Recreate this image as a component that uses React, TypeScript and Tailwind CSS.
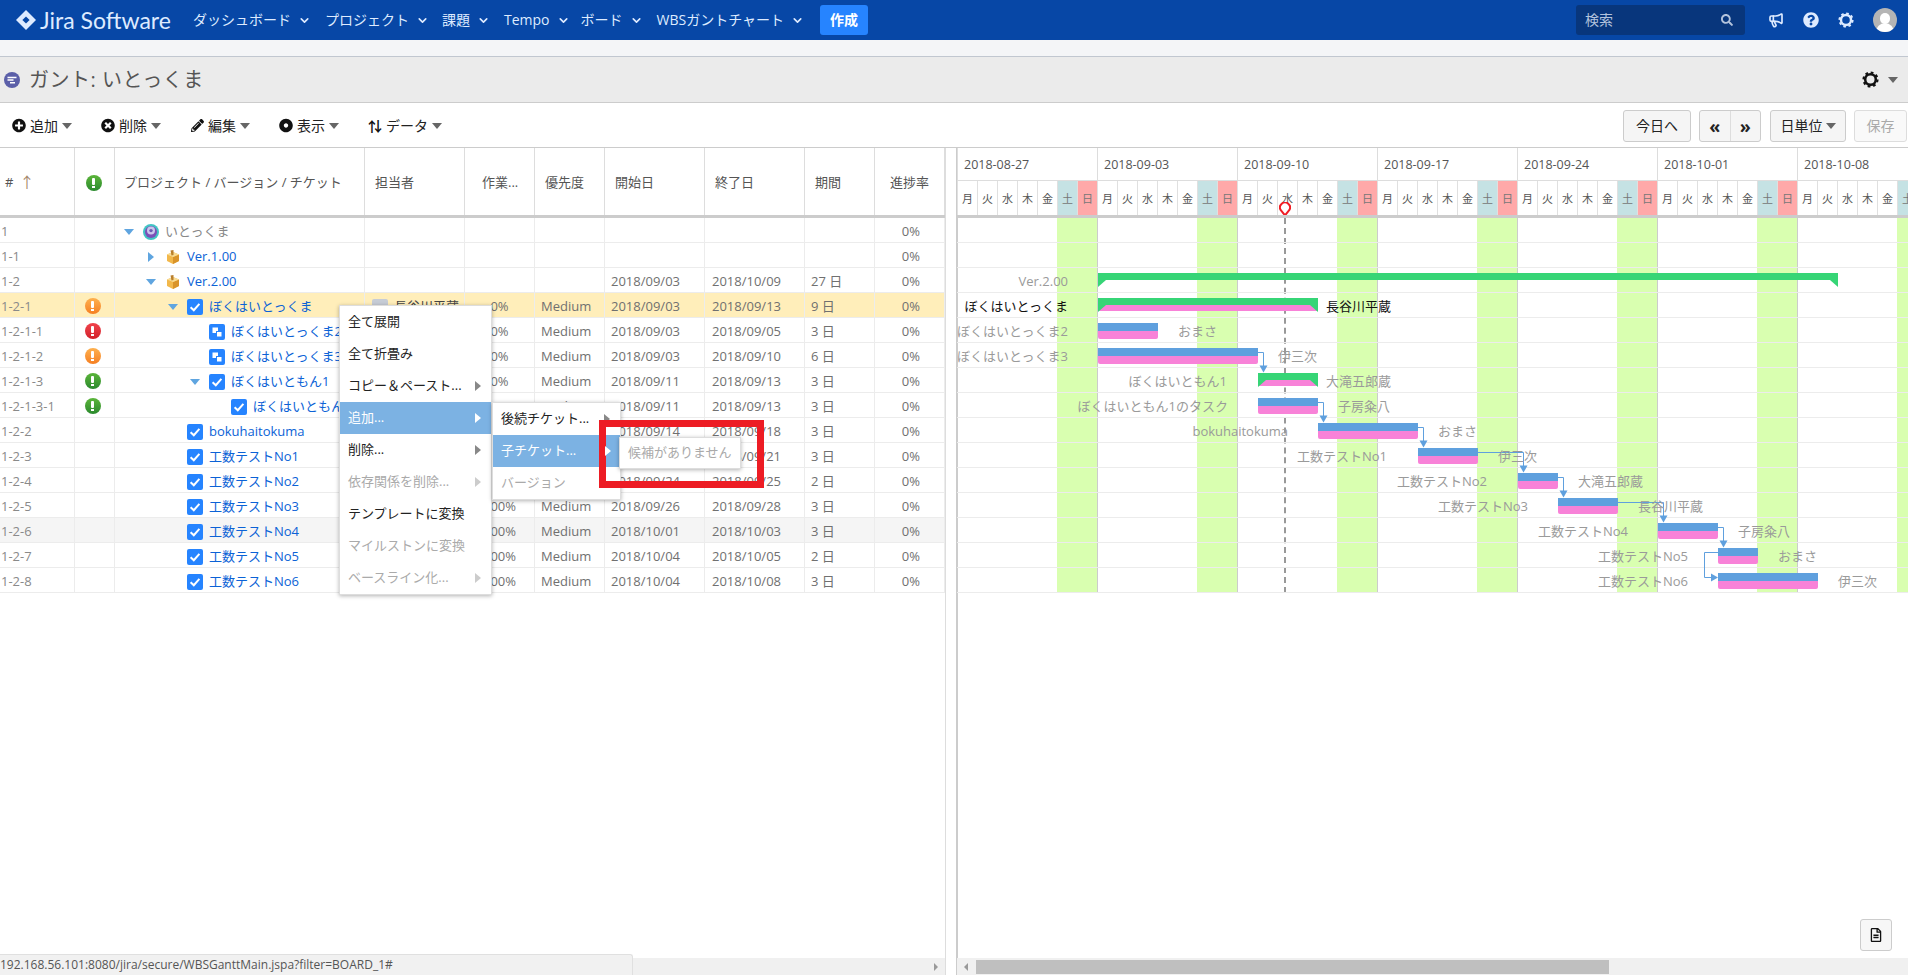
import { FaDotCircle, FaPencilAlt, FaPlusCircle, FaQuestionCircle, FaRegFileAlt, FaSearch, FaTimesCircle } from "react-icons/fa";
import { ChevronDown, Megaphone } from "lucide-react";

const X0 = 957;
const CANVAS_W = 951;
const DAY_NAMES = ["月", "火", "水", "木", "金", "土", "日"];
const WEEKS = ["2018-08-27", "2018-09-03", "2018-09-10", "2018-09-17", "2018-09-24", "2018-10-01", "2018-10-08"];

type Row = {
  id: string;
  level: number;
  icon: "project" | "version" | "check" | "sub";
  name: string;
  tree?: "down" | "right";
  status?: "orange" | "red" | "green";
  who?: string;
  work?: string;
  pri?: string;
  start?: string;
  end?: string;
  days?: string;
};

const rows: Row[] = [
  { id: "1", level: 0, icon: "project", name: "いとっくま", tree: "down" },
  { id: "1-1", level: 1, icon: "version", name: "Ver.1.00", tree: "right" },
  { id: "1-2", level: 1, icon: "version", name: "Ver.2.00", tree: "down", start: "2018/09/03", end: "2018/10/09", days: "27 日" },
  { id: "1-2-1", level: 2, icon: "check", name: "ぼくはいとっくま", tree: "down", status: "orange", who: "長谷川平蔵", work: "0%", pri: "Medium", start: "2018/09/03", end: "2018/09/13", days: "9 日" },
  { id: "1-2-1-1", level: 3, icon: "sub", name: "ぼくはいとっくま2", status: "red", who: "おまさ", work: "0%", pri: "Medium", start: "2018/09/03", end: "2018/09/05", days: "3 日" },
  { id: "1-2-1-2", level: 3, icon: "sub", name: "ぼくはいとっくま3", status: "orange", who: "伊三次", work: "0%", pri: "Medium", start: "2018/09/03", end: "2018/09/10", days: "6 日" },
  { id: "1-2-1-3", level: 3, icon: "check", name: "ぼくはいともん1", tree: "down", status: "green", who: "大滝五郎蔵", work: "0%", pri: "Medium", start: "2018/09/11", end: "2018/09/13", days: "3 日" },
  { id: "1-2-1-3-1", level: 4, icon: "check", name: "ぼくはいともん1のタスク", status: "green", who: "子房粂八", work: "0%", pri: "Medium", start: "2018/09/11", end: "2018/09/13", days: "3 日" },
  { id: "1-2-2", level: 2, icon: "check", name: "bokuhaitokuma", who: "おまさ", work: "100%", pri: "Medium", start: "2018/09/14", end: "2018/09/18", days: "3 日" },
  { id: "1-2-3", level: 2, icon: "check", name: "工数テストNo1", who: "伊三次", work: "100%", pri: "Medium", start: "2018/09/19", end: "2018/09/21", days: "3 日" },
  { id: "1-2-4", level: 2, icon: "check", name: "工数テストNo2", who: "大滝五郎蔵", work: "100%", pri: "Medium", start: "2018/09/24", end: "2018/09/25", days: "2 日" },
  { id: "1-2-5", level: 2, icon: "check", name: "工数テストNo3", who: "長谷川平蔵", work: "100%", pri: "Medium", start: "2018/09/26", end: "2018/09/28", days: "3 日" },
  { id: "1-2-6", level: 2, icon: "check", name: "工数テストNo4", who: "子房粂八", work: "100%", pri: "Medium", start: "2018/10/01", end: "2018/10/03", days: "3 日" },
  { id: "1-2-7", level: 2, icon: "check", name: "工数テストNo5", who: "おまさ", work: "100%", pri: "Medium", start: "2018/10/04", end: "2018/10/05", days: "2 日" },
  { id: "1-2-8", level: 2, icon: "check", name: "工数テストNo6", who: "伊三次", work: "100%", pri: "Medium", start: "2018/10/04", end: "2018/10/08", days: "3 日" },
];

type Bar = {
  kind?: "task" | "summary" | "version";
  from?: number;
  to?: number;
  label?: string;
  labelEnd?: number;
  who?: string;
  whoStart?: number;
  dark?: boolean;
};

const bars: Bar[] = [
  {},
  {},
  { kind: "version", from: 1098, to: 1838, label: "Ver.2.00", labelEnd: 1068 },
  { kind: "summary", from: 1098, to: 1318, label: "ぼくはいとっくま", labelEnd: 1068, who: "長谷川平蔵", whoStart: 1326, dark: true },
  { kind: "task", from: 1098, to: 1158, label: "ぼくはいとっくま2", labelEnd: 1068, who: "おまさ", whoStart: 1178 },
  { kind: "task", from: 1098, to: 1258, label: "ぼくはいとっくま3", labelEnd: 1068, who: "伊三次", whoStart: 1278 },
  { kind: "summary", from: 1258, to: 1318, label: "ぼくはいともん1", labelEnd: 1227, who: "大滝五郎蔵", whoStart: 1326 },
  { kind: "task", from: 1258, to: 1318, label: "ぼくはいともん1のタスク", labelEnd: 1228, who: "子房粂八", whoStart: 1338 },
  { kind: "task", from: 1318, to: 1418, label: "bokuhaitokuma", labelEnd: 1288, who: "おまさ", whoStart: 1438 },
  { kind: "task", from: 1418, to: 1478, label: "工数テストNo1", labelEnd: 1387, who: "伊三次", whoStart: 1498 },
  { kind: "task", from: 1518, to: 1558, label: "工数テストNo2", labelEnd: 1487, who: "大滝五郎蔵", whoStart: 1578 },
  { kind: "task", from: 1558, to: 1618, label: "工数テストNo3", labelEnd: 1528, who: "長谷川平蔵", whoStart: 1638 },
  { kind: "task", from: 1658, to: 1718, label: "工数テストNo4", labelEnd: 1628, who: "子房粂八", whoStart: 1738 },
  { kind: "task", from: 1718, to: 1758, label: "工数テストNo5", labelEnd: 1688, who: "おまさ", whoStart: 1778 },
  { kind: "task", from: 1718, to: 1818, label: "工数テストNo6", labelEnd: 1688, who: "伊三次", whoStart: 1838 },
];

// connector paths between bars, canvas coordinates are page x minus X0, y minus the top of the first row
const links = [
  { x: 1264, y: 348, from: 1258, row: 5 },
  { x: 1324, y: 398, from: 1318, row: 7 },
  { x: 1424, y: 423, from: 1418, row: 8 },
  { x: 1524, y: 448, from: 1478, row: 9 },
  { x: 1564, y: 473, from: 1558, row: 10 },
  { x: 1664, y: 498, from: 1618, row: 11 },
  { x: 1724, y: 523, from: 1718, row: 12 },
];

function Caret({ className = "border-t-[#666]" }: { className?: string }) {
  return <span className={`inline-block w-0 h-0 border-x-[5px] border-x-transparent border-t-[6px] ${className}`} />;
}

function Gear({ size, className }: { size: number; className: string }) {
  return (
    <svg width={size} height={size} viewBox="0 0 16 16" className={`block ${className}`}>
      <circle cx="8" cy="8" r="5" fill="none" stroke="currentColor" strokeWidth="2.4" />
      <circle cx="8" cy="8" r="6.6" fill="none" stroke="currentColor" strokeWidth="2" strokeDasharray="2.6 2.58" />
    </svg>
  );
}

function NavItem({ label }: { label: string }) {
  return (
    <div className="flex items-center gap-[7px] text-sm text-[#deebff] whitespace-nowrap">
      {label}
      <ChevronDown size={13} strokeWidth={3} />
    </div>
  );
}

function ToolItem({ icon, label }: { icon: React.ReactNode; label: string }) {
  return (
    <div className="flex items-center text-sm text-[#222]">
      <span className="w-[14px] flex justify-center mr-[4px]">{icon}</span>
      <span>{label}</span>
      <span className="ml-[4px] flex"><Caret /></span>
    </div>
  );
}

function TreeArrow({ dir }: { dir: "down" | "right" }) {
  if (dir === "down") {
    return (
      <svg width="10" height="6" viewBox="0 0 10 6" className="block">
        <polygon points="0,0 10,0 5,6" fill="#5fa5e0" />
      </svg>
    );
  }
  return (
    <svg width="6" height="10" viewBox="0 0 6 10" className="block">
      <polygon points="0,0 6,5 0,10" fill="#5fa5e0" />
    </svg>
  );
}

function CheckIcon() {
  return (
    <svg width="16" height="16" viewBox="0 0 16 16" className="block shrink-0">
      <rect width="16" height="16" rx="2" fill="#2684ff" />
      <path d="M3.6 8.2 L6.8 11.2 L12.4 4.9" stroke="#fff" strokeWidth="2" fill="none" />
    </svg>
  );
}

function SubIcon() {
  return (
    <svg width="16" height="16" viewBox="0 0 16 16" className="block shrink-0">
      <rect width="16" height="16" rx="2" fill="#2684ff" />
      <rect x="3.5" y="3.5" width="5.5" height="5.5" fill="#fff" />
      <rect x="7.5" y="7.5" width="5.5" height="5.5" fill="#fff" stroke="#2684ff" strokeWidth="1" />
    </svg>
  );
}

function CubeIcon() {
  return (
    <svg width="12" height="14" viewBox="0 0 12 14" className="block shrink-0">
      <polygon points="6,2 12,4.5 12,11 6,14 0,11 0,4.5" fill="#f2b84b" />
      <polygon points="6,7 12,4.5 12,11 6,14" fill="#d9942a" />
      <polygon points="6,2 12,4.5 6,7 0,4.5" fill="#f9dc93" />
      <polygon points="3.5,0.5 6.5,0 6.5,5 4.5,5.5" fill="#b97f2c" />
    </svg>
  );
}

function ProjectIcon() {
  return (
    <svg width="16" height="16" viewBox="0 0 16 16" className="block shrink-0">
      <circle cx="8" cy="8" r="8" fill="#41c4c4" />
      <circle cx="8" cy="8" r="6" fill="#7c4fb8" />
      <circle cx="8" cy="6.6" r="4" fill="#c9c6ec" />
      <circle cx="8" cy="6.6" r="1.7" fill="#6a5cb4" />
    </svg>
  );
}

function StatusIcon({ tone }: { tone: "orange" | "red" | "green" }) {
  const bg =
    tone === "orange"
      ? "bg-gradient-to-b from-[#fdb04e] to-[#f57f20]"
      : tone === "red"
        ? "bg-gradient-to-b from-[#f0434c] to-[#d3202a]"
        : "bg-gradient-to-b from-[#5bb53a] to-[#2a8a2e]";
  return (
    <span className={`w-4 h-4 rounded-full flex flex-col items-center justify-center gap-[1px] ${bg}`}>
      <span className="w-[3px] h-[7px] bg-white rounded-[1px]" />
      <span className="w-[3px] h-[2px] bg-white" />
    </span>
  );
}

function RowIcon({ kind }: { kind: Row["icon"] }) {
  if (kind === "project") return <ProjectIcon />;
  if (kind === "version") return <span className="mx-[2px] shrink-0"><CubeIcon /></span>;
  if (kind === "sub") return <SubIcon />;
  return <CheckIcon />;
}

const cols = [
  { w: "w-[75px]", label: "#" },
  { w: "w-[40px]", label: "" },
  { w: "w-[250px]", label: "プロジェクト / バージョン / チケット" },
  { w: "w-[100px]", label: "担当者" },
  { w: "w-[70px]", label: "作業..." },
  { w: "w-[70px]", label: "優先度" },
  { w: "w-[100px]", label: "開始日" },
  { w: "w-[100px]", label: "終了日" },
  { w: "w-[70px]", label: "期間" },
  { w: "w-[70px]", label: "進捗率" },
];

function HeaderRow() {
  return (
    <div className="flex h-[70px] border-b-[3px] border-[#ccc] text-[13px] text-[#555]">
      {cols.map((c, i) => (
        <div
          key={i}
          className={`${c.w} shrink-0 flex items-center pt-[2px] border-r border-[#ddd] ${
            i === 4 ? "pl-[17px]" : i === 9 ? "pl-[15px]" : i === 0 ? "pl-[5px] gap-[6px]" : i === 1 ? "justify-center pr-[2px]" : i === 2 ? "pl-[9px]" : "pl-[10px]"
          }`}
        >
          {c.label}
          {i === 0 && <span className="text-[#a5886a] text-[15px] leading-none">↑</span>}
          {i === 1 && <StatusIcon tone="green" />}
        </div>
      ))}
    </div>
  );
}

function TableRow({ row }: { row: Row }) {
  const bg = row.id === "1-2-1" ? "bg-[#ffeeba]" : row.id === "1-2-6" ? "bg-[#f5f5f5]" : "bg-white";
  const tone = row.level === 0 ? "text-[#888]" : "text-[#0b62d6]";
  return (
    <div className={`flex h-[25px] border-b border-[#ececec] text-[13px] text-[#707070] ${bg}`}>
      <div className="w-[75px] shrink-0 pl-[1px] pt-[3px] flex items-center border-r border-[#ececec] text-[#8a8a8a] whitespace-nowrap overflow-hidden">{row.id}</div>
      <div className="w-[40px] shrink-0 flex items-center justify-center pr-[4px] pt-[2px] border-r border-[#ececec]">
        {row.status && <StatusIcon tone={row.status} />}
      </div>
      <div className="w-[250px] shrink-0 relative border-r border-[#ececec] overflow-hidden">
        <div className="h-full flex items-center pt-[3px] whitespace-nowrap" style={{ paddingLeft: row.level * 22 + 28 }}>
          <span className={`w-4 h-4 shrink-0 flex items-center justify-center -ml-[22px] mr-[6px] ${row.tree ? "" : "invisible"}`}>
            {row.tree && <TreeArrow dir={row.tree} />}
          </span>
          <RowIcon kind={row.icon} />
          <span className={`ml-[6px] ${tone}`}>{row.name}</span>
        </div>
      </div>
      <div className="w-[100px] shrink-0 flex items-center gap-[6px] pl-[7px] pt-[3px] border-r border-[#ececec] whitespace-nowrap overflow-hidden">
        {row.who && (
          <>
            <span className="w-4 h-4 shrink-0 bg-[#c6ccd6] rounded-[2px] flex items-end justify-center overflow-hidden">
              <span className="w-[10px] h-[11px] rounded-full bg-white translate-y-[3px]" />
            </span>
            <span className="text-[#444]">{row.who}</span>
          </>
        )}
      </div>
      <div className="w-[70px] shrink-0 flex items-center justify-center pt-[3px] border-r border-[#ececec]">{row.work}</div>
      <div className="w-[70px] shrink-0 flex items-center pl-[6px] pt-[3px] border-r border-[#ececec]">{row.pri}</div>
      <div className="w-[100px] shrink-0 flex items-center pl-[6px] pt-[3px] border-r border-[#ececec]">{row.start}</div>
      <div className="w-[100px] shrink-0 flex items-center pl-[7px] pt-[3px] border-r border-[#ececec]">{row.end}</div>
      <div className="w-[70px] shrink-0 flex items-center pl-[6px] pt-[3px] border-r border-[#ececec]">{row.days}</div>
      <div className="w-[70px] shrink-0 flex items-center justify-end pr-[24px] pt-[3px] border-r border-[#ececec]">0%</div>
    </div>
  );
}

function GanttHeader() {
  const days = Array.from({ length: 48 }, (_, i) => i);
  return (
    <div className="relative h-[70px] border-b-[3px] border-[#ccc] overflow-hidden">
      <div className="flex h-[33px] border-b border-[#ddd]">
        {WEEKS.map((w) => (
          <div key={w} className="w-[140px] shrink-0 pl-[6px] pt-[2px] flex items-center text-[12.5px] text-[#555] border-l border-[#ddd]">
            {w}
          </div>
        ))}
      </div>
      <div className="flex h-[34px]">
        {days.map((d) => {
          const n = d % 7;
          return (
            <div
              key={d}
              className={`w-5 shrink-0 flex items-center justify-center pt-[2px] text-[11px] border-l border-[#e0e0e0] ${
                n === 5 ? "bg-[#c5e2e4] text-[#777]" : n === 6 ? "bg-[#ffa9a9] text-[#777]" : "text-[#555]"
              }`}
            >
              {DAY_NAMES[n]}
            </div>
          );
        })}
      </div>
      <svg width="12" height="15" viewBox="0 0 12 15" className="absolute left-[322px] top-[54px] block">
        <path d="M6 13.4 L1.8 8.2 A5 5 0 1 1 10.2 8.2 Z" fill="#fff" stroke="#f01c24" strokeWidth="2" strokeLinejoin="round" />
      </svg>
    </div>
  );
}

function GanttBar({ bar }: { bar: Bar }) {
  if (!bar.kind) return null;
  const left = (bar.from as number) - X0;
  const width = (bar.to as number) - (bar.from as number);
  if (bar.kind === "task") {
    return (
      <div className="absolute top-[5px] h-4 z-10 flex flex-col" style={{ left, width }}>
        <div className="h-2 bg-[#5fa0de]" />
        <div className="h-2 bg-[#f882d8] rounded-b-[2px]" />
      </div>
    );
  }
  return (
    <div className="absolute top-[5px] z-10" style={{ left, width }}>
      <div className="h-[7px] bg-[#36d576]" />
      {bar.kind === "summary" && <div className="h-[6px] bg-[#f882d8] mx-[1px]" />}
      <svg width="8" height="7" viewBox="0 0 8 7" className="absolute left-0 top-[7px] block">
        <polygon points="0,0 8,0 0,7" fill="#36d576" />
      </svg>
      <svg width="8" height="7" viewBox="0 0 8 7" className="absolute right-0 top-[7px] block">
        <polygon points="0,0 8,0 8,7" fill="#36d576" />
      </svg>
    </div>
  );
}

function GanttRow({ bar }: { bar: Bar }) {
  return (
    <div className="relative h-[25px] border-b border-[#ececec] text-[13px] text-[#9a9a9a] whitespace-nowrap">
      <GanttBar bar={bar} />
      {bar.label && (
        <span
          className={`absolute top-0 h-full pt-[3px] flex items-center z-20 ${bar.dark ? "text-[#111]" : ""}`}
          style={{ right: CANVAS_W - ((bar.labelEnd as number) - X0) }}
        >
          {bar.label}
        </span>
      )}
      {bar.who && (
        <span
          className={`absolute top-0 h-full pt-[3px] flex items-center z-20 ${bar.dark ? "text-[#111]" : ""}`}
          style={{ left: (bar.whoStart as number) - X0 }}
        >
          {bar.who}
        </span>
      )}
    </div>
  );
}

function Connectors() {
  const top = 218;
  return (
    <svg width={CANVAS_W} height="375" className="absolute left-0 top-0 z-10">
      {links.map((l) => {
        const y = l.y - top + 4.5;
        const x = l.x - X0 - 0.5;
        return (
          <g key={l.row}>
            <path d={`M${l.from - X0} ${y} H${x} V${y + 14}`} stroke="#5fa0de" strokeWidth="1" fill="none" />
            <polygon points={`${x - 4},${y + 13} ${x + 4},${y + 13} ${x},${y + 20}`} fill="#5fa0de" />
          </g>
        );
      })}
      <path d={`M${1718 - X0} 334.5 H${1704.5 - X0} V359.5 H${1712 - X0}`} stroke="#5fa0de" strokeWidth="1" fill="none" />
      <polygon points={`${1711 - X0},355.5 ${1718 - X0},359.5 ${1711 - X0},363.5`} fill="#5fa0de" />
    </svg>
  );
}

function MenuArrow({ tone }: { tone: string }) {
  return <span className={`w-0 h-0 border-y-[5px] border-y-transparent border-l-[6px] ${tone}`} />;
}

function MenuItem({ label, active, disabled, more, muted }: { label: string; active?: boolean; disabled?: boolean; more?: boolean; muted?: boolean }) {
  return (
    <div
      className={`h-8 flex items-center justify-between pl-2 pr-[10px] whitespace-nowrap ${
        active ? "bg-[#7cb2e3] text-white" : disabled ? "text-[#aaa]" : "text-[#222]"
      }`}
    >
      {label}
      {more && <MenuArrow tone={active ? "border-l-white" : muted ? "border-l-[#ccc]" : "border-l-[#888]"} />}
    </div>
  );
}

function ContextMenus() {
  const box = "absolute z-30 bg-white border border-[#ddd] shadow-[0_1px_4px_rgba(0,0,0,0.3)] text-[13px]";
  return (
    <>
      <div className={`${box} left-[339px] top-[305px] w-[153px]`}>
        <MenuItem label="全て展開" />
        <MenuItem label="全て折畳み" />
        <MenuItem label="コピー＆ペースト..." more />
        <MenuItem label="追加..." more active />
        <MenuItem label="削除..." more />
        <MenuItem label="依存関係を削除..." more disabled muted />
        <MenuItem label="テンプレートに変換" />
        <MenuItem label="マイルストンに変換" disabled />
        <MenuItem label="ベースライン化..." more disabled muted />
      </div>
      <div className={`${box} left-[492px] top-[402px] w-[129px]`}>
        <MenuItem label="後続チケット..." more />
        <MenuItem label="子チケット..." more active />
        <MenuItem label="バージョン" disabled />
      </div>
      <div className={`${box} left-[619px] top-[437px] w-[122px] h-8 flex items-center pl-2 text-[#aaa]`}>候補がありません</div>
      <div className="absolute z-40 left-[599px] top-[420px] w-[165px] h-[68px] border-[7px] border-[#ed1c24]" />
      {/* the submenu arrow sits on top of the red frame in the picture */}
      <span className="absolute z-50 left-[605px] top-[446px] w-0 h-0 border-y-[5px] border-y-transparent border-l-[6px] border-l-white" />
    </>
  );
}

export default function App() {
  return (
    <div className="relative w-[1908px] h-[975px] overflow-hidden bg-white font-['Open_Sans','Noto_Sans_CJK_JP',sans-serif] flex flex-col">
      {/* top nav */}
      <div className="h-10 shrink-0 bg-[#0747a6] flex items-center">
        <div className="flex items-center pl-4 w-[193px] shrink-0">
          <svg width="20" height="20" viewBox="0 0 20 20" className="block shrink-0">
            <path d="M10 0 L20 10 L10 20 L0 10 Z" fill="#deebff" />
            <path d="M10 6.4 L13.6 10 L10 13.6 L6.4 10 Z" fill="#0747a6" />
          </svg>
          <span className="ml-[4px] text-[23px] leading-none text-[#deebff] font-['Lato',sans-serif] whitespace-nowrap">Jira Software</span>
        </div>
        <NavItem label="ダッシュボード" />
        <div className="w-[14px]" />
        <NavItem label="プロジェクト" />
        <div className="w-[13px]" />
        <NavItem label="課題" />
        <div className="w-[14px]" />
        <NavItem label="Tempo" />
        <div className="w-[11px]" />
        <NavItem label="ボード" />
        <div className="w-[14px]" />
        <NavItem label="WBSガントチャート" />
        <div className="ml-[16px] w-12 h-[30px] rounded-[3px] bg-[#2684ff] text-white text-sm font-bold flex items-center justify-center">作成</div>
        <div className="ml-auto w-[169px] h-[30px] rounded-[3px] bg-[#08367c] flex items-center justify-between pl-[9px] pr-[12px] text-sm text-[#b3c3dc]">
          検索
          <FaSearch size={12} />
        </div>
        <div className="ml-[23px] mr-[11px] flex items-center gap-[19px] text-[#deebff]">
          <Megaphone size={16} strokeWidth={2.5} />
          <FaQuestionCircle size={16} />
          <Gear size={16} className="text-[#deebff]" />
          <span className="w-6 h-6 rounded-full bg-[#b5b5b5] flex items-end justify-center overflow-hidden relative">
            <span className="absolute top-[5px] left-[7px] w-[10px] h-[11px] rounded-full bg-white" />
            <span className="w-[18px] h-[9px] rounded-t-full bg-white" />
          </span>
        </div>
      </div>

      <div className="h-[17px] shrink-0 bg-[#f4f5f7] border-b border-[#c1c7d0]" />

      {/* title bar */}
      <div className="h-[46px] shrink-0 bg-[#ebebeb] border-b-[1.5px] border-[#ccc] flex items-center pl-1 pr-[10px]">
        <svg width="16" height="16" viewBox="0 0 16 16" className="block shrink-0">
          <circle cx="8" cy="8" r="8" fill="#5b5fa8" />
          <path d="M3.5 5.5 H12.5 M3.5 8 H9.5 M6 10.8 H11" stroke="#fff" strokeWidth="1.5" />
        </svg>
        <span className="ml-[9px] text-xl tracking-[0.5px] text-[#555] whitespace-nowrap">ガント: いとっくま</span>
        <div className="ml-auto flex items-center gap-[9px]">
          <Gear size={17} className="text-[#111]" />
          <Caret />
        </div>
      </div>

      {/* toolbar */}
      <div className="h-[45px] shrink-0 flex items-center pl-[12px] pr-[1px] pt-[1px] border-b border-[#ccc]">
        <div className="flex items-center gap-[29px]">
          <ToolItem icon={<FaPlusCircle size={15} className="text-[#111]" />} label="追加" />
          <ToolItem icon={<FaTimesCircle size={15} className="text-[#111]" />} label="削除" />
          <ToolItem icon={<FaPencilAlt size={13} className="text-[#111]" />} label="編集" />
          <ToolItem icon={<FaDotCircle size={15} className="text-[#111]" />} label="表示" />
          <ToolItem
            icon={<span className="text-[14px] leading-none font-bold text-[#111]">⇅</span>}
            label="データ"
          />
        </div>
        <div className="ml-auto flex items-center text-sm text-[#222]">
          <div className="w-[68px] h-8 flex items-center justify-center border border-[#ccc] rounded-[3px] bg-[#f5f5f5]">今日へ</div>
          <div className="ml-2 w-[62px] h-8 flex border border-[#ccc] rounded-[3px] bg-[#f5f5f5] font-bold text-[18px] leading-none">
            <div className="flex-1 flex items-center justify-center border-r border-[#ddd]">«</div>
            <div className="flex-1 flex items-center justify-center">»</div>
          </div>
          <div className="ml-[9px] w-[76px] h-8 flex items-center justify-center gap-[3px] border border-[#ccc] rounded-[3px] bg-[#f5f5f5]">
            日単位 <Caret />
          </div>
          <div className="ml-2 w-[53px] h-8 flex items-center justify-center border border-[#ddd] rounded-[3px] bg-[#f9f9f9] text-[#aaa]">保存</div>
        </div>
      </div>

      {/* table + gantt */}
      <div className="flex-1 min-h-0 flex">
        <div className="w-[945px] shrink-0 flex flex-col">
          <HeaderRow />
          {rows.map((r) => (
            <TableRow key={r.id} row={r} />
          ))}
          <div className="mt-auto h-[17px] bg-[#f0f0f0] flex items-center justify-end pr-[7px]">
            <span className="w-0 h-0 border-y-[4px] border-y-transparent border-l-[4px] border-l-[#999]" />
          </div>
        </div>
        <div className="w-[13px] shrink-0 border-l border-[#ddd] border-r-2 border-r-[#ccc]" />
        <div className="flex-1 min-w-0 -ml-px flex flex-col overflow-hidden">
          <GanttHeader />
          <div className="relative h-[375px] shrink-0">
            {WEEKS.map((w, i) => (
              <div key={w} className="absolute top-0 bottom-0 flex" style={{ left: i * 140 + 100 }}>
                <div className="w-10 bg-[#d9ffb0]" />
                <div className="w-px bg-[#ccc]" />
              </div>
            ))}
            <div className="absolute top-0 bottom-0 left-[327px] border-l-2 border-dashed border-[#999]" />
            {bars.map((b, i) => (
              <GanttRow key={i} bar={b} />
            ))}
            <Connectors />
          </div>
          <div className="mt-auto h-[17px] bg-[#f0f0f0] flex items-center pl-[7px]">
            <span className="w-0 h-0 border-y-[4px] border-y-transparent border-r-[4px] border-r-[#999]" />
            <span className="ml-[8px] w-[633px] h-[14px] bg-[#bfbfbf]" />
          </div>
        </div>
      </div>

      <ContextMenus />

      <div className="absolute z-30 left-[1860px] top-[919px] w-8 h-8 flex items-center justify-center border border-[#ccc] rounded-[3px] bg-[#f7f7f7]">
        <FaRegFileAlt size={14} className="text-[#111]" />
      </div>
      <div className="absolute z-30 left-0 top-[954px] w-[633px] h-[21px] bg-[#f1f1f1] border-t border-r border-[#e0e0e0] rounded-tr-[3px] flex items-center text-xs text-[#555] whitespace-nowrap overflow-hidden">
        192.168.56.101:8080/jira/secure/WBSGanttMain.jspa?filter=BOARD_1#
      </div>
    </div>
  );
}
